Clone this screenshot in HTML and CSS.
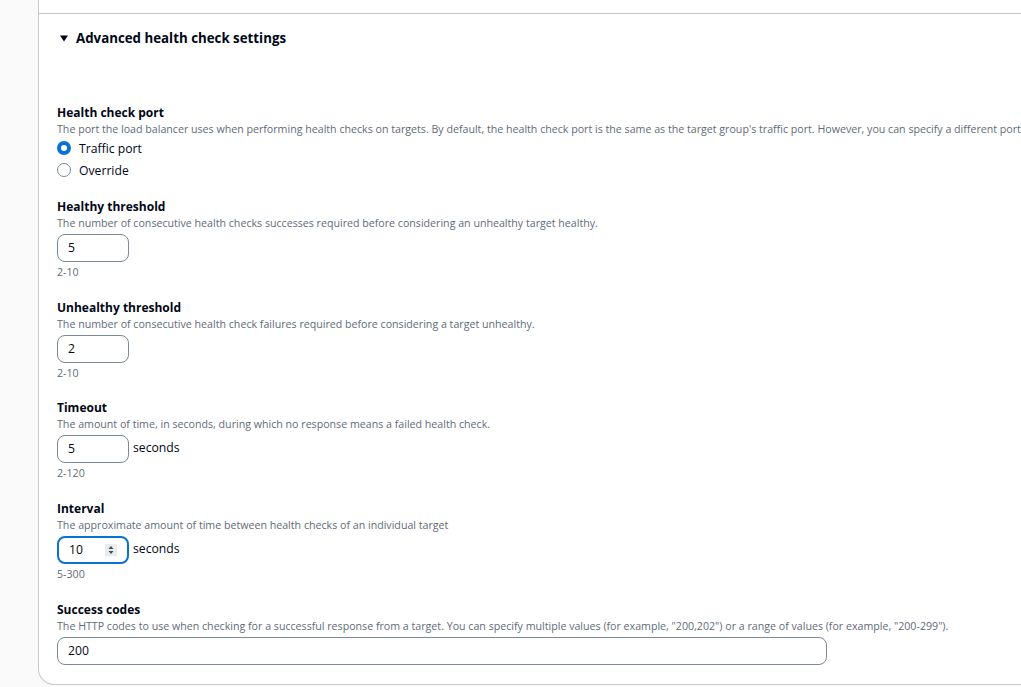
FILE: index.html
```html
<!DOCTYPE html>
<html lang="en">
<head>
<meta charset="utf-8">
<title>Advanced health check settings</title>
<link rel="stylesheet" href="styles.css">
</head>
<body>
<div class="card">
  <div class="card-top"></div>
  <div class="card-body">
    <div class="expander">
      <svg class="caret" width="8" height="7" viewBox="0 0 8 7"><path d="M0 0.5 H8 L4 6.5 Z" fill="#000716"/></svg>
      <span>Advanced health check settings</span>
    </div>

    <div class="fields">
      <div class="field">
        <div class="label">Health check port</div>
        <div class="desc">The port the load balancer uses when performing health checks on targets. By default, the health check port is the same as the target group's traffic port. However, you can specify a different port</div>
        <div class="radios">
          <label class="radio"><span class="dot checked"></span>Traffic port</label>
          <label class="radio"><span class="dot"></span>Override</label>
        </div>
      </div>

      <div class="field">
        <div class="label">Healthy threshold</div>
        <div class="desc">The number of consecutive health checks successes required before considering an unhealthy target healthy.</div>
        <div class="control"><div class="input small">5</div></div>
        <div class="constraint">2-10</div>
      </div>

      <div class="field">
        <div class="label">Unhealthy threshold</div>
        <div class="desc">The number of consecutive health check failures required before considering a target unhealthy.</div>
        <div class="control"><div class="input small">2</div></div>
        <div class="constraint">2-10</div>
      </div>

      <div class="field">
        <div class="label">Timeout</div>
        <div class="desc">The amount of time, in seconds, during which no response means a failed health check.</div>
        <div class="control"><div class="input small">5</div><span class="unit">seconds</span></div>
        <div class="constraint">2-120</div>
      </div>

      <div class="field">
        <div class="label">Interval</div>
        <div class="desc">The approximate amount of time between health checks of an individual target</div>
        <div class="control">
          <div class="input small focused">10
            <span class="spinner"><svg width="6" height="10" viewBox="0 0 6 10"><path d="M0.5 4 L3 1 L5.5 4 Z M0.5 6 L3 9 L5.5 6 Z" fill="#414d5c"/></svg></span>
          </div>
          <span class="unit">seconds</span>
        </div>
        <div class="constraint">5-300</div>
      </div>

      <div class="field">
        <div class="label">Success codes</div>
        <div class="desc">The HTTP codes to use when checking for a successful response from a target. You can specify multiple values (for example, "200,202") or a range of values (for example, "200-299").</div>
        <div class="control"><div class="input wide">200</div></div>
      </div>
    </div>
  </div>
</div>
</body>
</html>
```
FILE: styles.css
```css
* { box-sizing: border-box; }
html, body {
  margin: 0;
  padding: 0;
  background: #fafafa;
  overflow: hidden;
  height: 687px;
}
body {
  font-family: "Open Sans", "Noto Sans", Arial, sans-serif;
  color: #000716;
  padding-left: 38px;
}
.card {
  width: 1100px;
  background: #ffffff;
  border: 1px solid #c6c6cd;
  border-top: none;
  border-radius: 0 0 16px 16px;
  height: 685px;
}
.card-top {
  height: 14px;
  border-bottom: 1px solid #c6c6cd;
}
.card-body {
  padding: 14px 0 0 18px;
}
.expander {
  display: flex;
  align-items: center;
  height: 20px;
  font-size: 13.3px;
  font-weight: 700;
  padding-left: 3px;
}
.caret { margin-right: 8px; }
.fields {
  display: flex;
  flex-direction: column;
  gap: 19.75px;
  margin-top: 57px;
}
.label {
  font-size: 12px;
  font-weight: 700;
  line-height: 16px;
}
.desc {
  font-size: 10.65px;
  line-height: 16px;
  color: #5f6b7a;
  white-space: nowrap;
}
.radios {
  margin-top: 0;
  margin-bottom: -2px;
  display: flex;
  flex-direction: column;
}
.radio {
  display: flex;
  align-items: center;
  height: 22px;
  font-size: 12.2px;
}
.dot {
  width: 14px;
  height: 14px;
  border-radius: 50%;
  border: 1px solid #7d8998;
  margin-right: 8px;
  background: #fff;
}
.dot.checked {
  border: 4px solid #0972d3;
}
.control {
  display: flex;
  align-items: flex-start;
  margin-top: 3px;
}
.input {
  height: 28px;
  border: 1px solid #7d8998;
  border-radius: 8px;
  font-size: 12.2px;
  line-height: 26px;
  padding-left: 10px;
  position: relative;
}
.input.small { width: 72px; }
.input.wide { width: 770px; }
.input.focused {
  border: 2px solid #0972d3;
  line-height: 24px;
  padding-left: 10px;
}
.spinner {
  position: absolute;
  right: 10px;
  top: 6px;
  width: 12px;
  height: 12px;
  background: #e9ebed;
  display: flex;
  align-items: center;
  justify-content: center;
}
.unit {
  font-size: 12.2px;
  line-height: 20px;
  margin-left: 4px;
  margin-top: 3px;
}
.constraint {
  font-size: 10.65px;
  line-height: 16px;
  color: #5f6b7a;
  margin-top: 2px;
}
```
